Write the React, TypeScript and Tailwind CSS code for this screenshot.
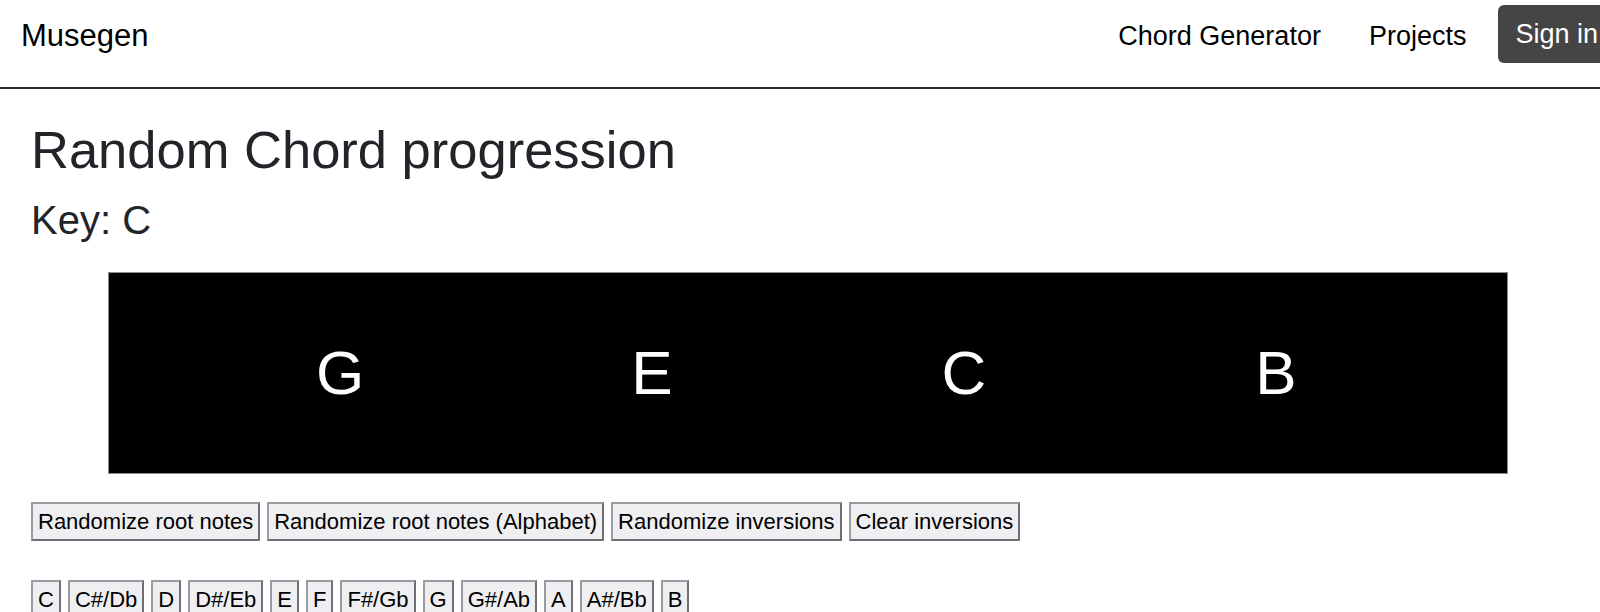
const chords = ["G", "E", "C", "B"];
const actions = [
  "Randomize root notes",
  "Randomize root notes (Alphabet)",
  "Randomize inversions",
  "Clear inversions",
];
const notes = ["C", "C#/Db", "D", "D#/Eb", "E", "F", "F#/Gb", "G", "G#/Ab", "A", "A#/Bb", "B"];

const btn =
  "h-[39px] px-[5px] border-2 border-t-[#9a9aa2] border-l-[#9a9aa2] border-r-[#6f6f78] border-b-[#6f6f78] bg-[#efeff1] text-[22px] leading-none text-black whitespace-nowrap";

export default function App() {
  return (
    <div className="w-[1600px] min-h-[612px] bg-white font-['Liberation_Sans',Arial,sans-serif] overflow-hidden">
      <header className="h-[89px] flex items-start justify-between pt-[5px] pl-[21px] border-b-2 border-[#2a2a2a]">
        <a className="h-[62px] flex items-center text-[31px] text-black">Musegen</a>
        <nav className="flex items-start mr-[-24px]">
          <a className="h-[62px] flex items-center px-[24px] text-[27px] text-black">Chord Generator</a>
          <a className="h-[62px] flex items-center px-[24px] text-[27px] text-black">Projects</a>
          <button className="ml-[8px] h-[58px] pl-[17px] pr-[26px] rounded-[6px] bg-[#454545] text-white text-[27px] whitespace-nowrap">
            Sign in
          </button>
        </nav>
      </header>

      <main className="px-[31px] pt-[29px] text-[#212529]">
        <h1 className="text-[52.5px] leading-[1.2] font-normal">Random Chord progression</h1>
        <h3 className="mt-[15px] text-[40px] leading-[1.2] font-normal">Key: C</h3>

        <div className="mt-[28px] ml-[77px] w-[1400px] h-[202px] bg-black border border-[#8a8a8a] grid grid-cols-4 items-center px-[75px]">
          {chords.map((c, i) => (
            <div key={i} className="text-center text-white text-[62px] leading-none">
              {c}
            </div>
          ))}
        </div>

        <div className="mt-[28px] flex gap-[7px]">
          {actions.map((a) => (
            <button key={a} className={btn}>
              {a}
            </button>
          ))}
        </div>

        <div className="mt-[39px] flex gap-[7px]">
          {notes.map((n) => (
            <button key={n} className={btn}>
              {n}
            </button>
          ))}
        </div>
      </main>
    </div>
  );
}
